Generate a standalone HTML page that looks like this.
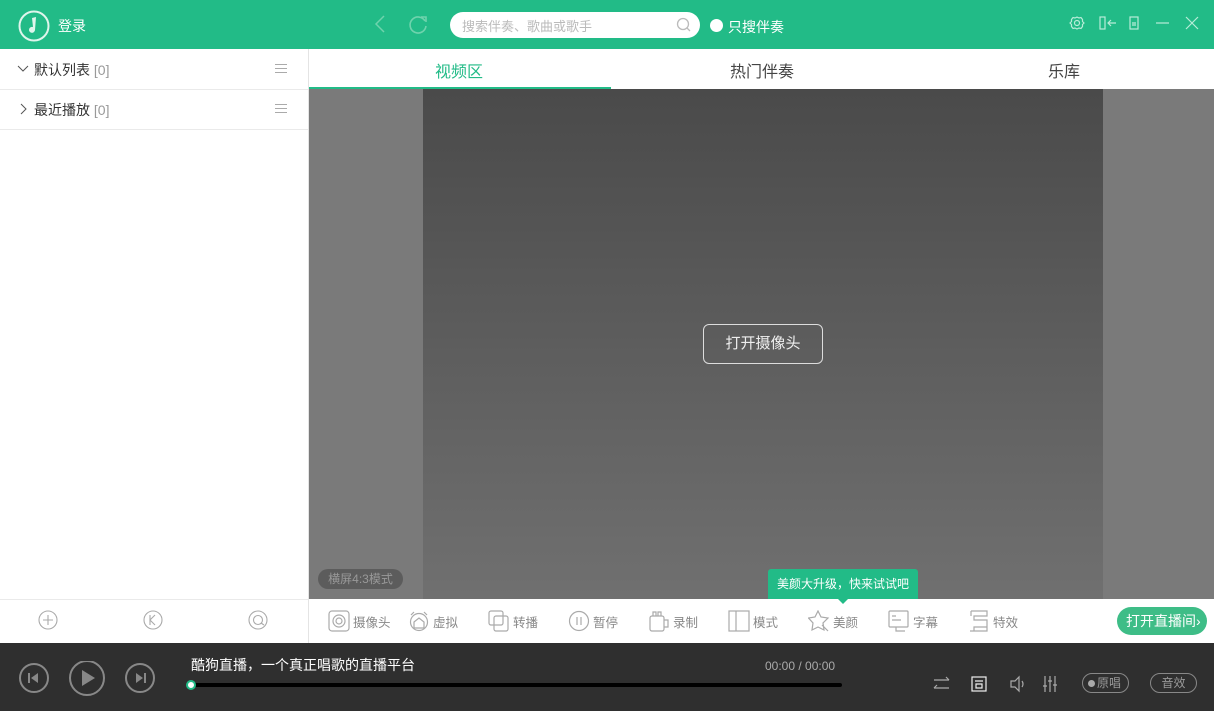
<!DOCTYPE html>
<html><head><meta charset="utf-8"><style>
*{margin:0;padding:0;box-sizing:border-box}
body{width:1214px;height:711px;overflow:hidden;font-family:"Liberation Sans","Noto Sans CJK SC",sans-serif;background:#fff;position:relative}
.abs{position:absolute}
.hdr{left:0;top:0;width:1214px;height:49px;background:#22bb87}
.t{font-size:14px;color:#333}
.gray{color:#999}
.tool{position:absolute;top:609px;height:24px;font-size:12.5px;color:#888;display:flex;align-items:center;gap:3px}
.tool svg{stroke:#aaa;fill:none;stroke-width:1.2}
</style></head><body>
<div class="abs hdr"></div>
<svg class="abs" style="left:18px;top:10px" width="32" height="32" viewBox="0 0 32 32"><circle cx="16" cy="16" r="14.5" fill="none" stroke="#dff5ec" stroke-width="2"/><path d="M14 8 L18 7 L17 20 A3 3 0 1 1 15 17 Z" fill="#dff5ec"/></svg>
<div class="abs" style="left:58px;top:16px;color:#fff;font-size:14px">登录</div>
<svg class="abs" style="left:372px;top:14px" width="16" height="20"><path d="M12 2 L4 10 L12 18" stroke="#6fd3ad" fill="none" stroke-width="1.5"/></svg>
<svg class="abs" style="left:408px;top:13px" width="22" height="22"><path d="M17 8 A8 8 0 1 0 18 13" stroke="#6fd3ad" fill="none" stroke-width="1.6"/><path d="M13 4 L18 4 L18 9" stroke="#6fd3ad" fill="none" stroke-width="1.6"/></svg>
<div class="abs" style="left:450px;top:12px;width:250px;height:26px;background:#fff;border-radius:13px"></div>
<div class="abs" style="left:462px;top:16px;font-size:13px;color:#bbb">搜索伴奏、歌曲或歌手</div>
<svg class="abs" style="left:676px;top:17px" width="16" height="16"><circle cx="7" cy="7" r="5.5" stroke="#bbb" fill="none" stroke-width="1.3"/><path d="M11 11 L14 14" stroke="#bbb" stroke-width="1.3"/></svg>
<div class="abs" style="left:710px;top:19px;width:13px;height:13px;border-radius:50%;background:#fff"></div>
<div class="abs" style="left:728px;top:17px;color:#fff;font-size:14px">只搜伴奏</div>
<svg class="abs" style="left:1068px;top:14px" width="140" height="20" fill="none" stroke="#b8ecd8" stroke-width="1.2">
<circle cx="9" cy="9" r="2.5"/><path d="M9 3 L11 4 L13 3.5 L14.5 5.5 L14.5 7.5 L16 9 L14.5 10.5 L14.5 12.5 L13 14.5 L11 14 L9 15 L7 14 L5 14.5 L3.5 12.5 L3.5 10.5 L2 9 L3.5 7.5 L3.5 5.5 L5 3.5 L7 4 Z"/>
<rect x="32" y="3" width="5" height="12"/><path d="M40 9 H48 M43 6 L40 9 L43 12"/>
<rect x="62" y="3" width="8" height="12"/><path d="M64 9 H68 M64 11 H68"/>
<path d="M88 9 H101"/>
<path d="M118 3 L130 15 M130 3 L118 15"/>
</svg>
<div class="abs" style="left:308px;top:49px;width:1px;height:594px;background:#e4e4e4"></div>
<div class="abs" style="left:0;top:89px;width:308px;height:1px;background:#eaeaea"></div>
<div class="abs" style="left:0;top:129px;width:308px;height:1px;background:#eaeaea"></div>
<svg class="abs" style="left:17px;top:63px" width="12" height="12"><path d="M1 3 L6 8 L11 3" stroke="#555" fill="none"/></svg>
<div class="abs t" style="left:34px;top:60px">默认列表 <span class="gray">[0]</span></div>
<svg class="abs" style="left:19px;top:103px" width="10" height="12"><path d="M2 1 L7 6 L2 11" stroke="#555" fill="none"/></svg>
<div class="abs t" style="left:34px;top:100px">最近播放 <span class="gray">[0]</span></div>
<svg class="abs" style="left:274px;top:63px" width="14" height="12"><path d="M1 1.5H13M1 5.5H13M1 9.5H13" stroke="#aaa"/></svg>
<svg class="abs" style="left:274px;top:103px" width="14" height="12"><path d="M1 1.5H13M1 5.5H13M1 9.5H13" stroke="#aaa"/></svg>
<div class="abs" style="left:0;top:599px;width:308px;height:1px;background:#eaeaea"></div>
<svg class="abs" style="left:38px;top:610px" width="240" height="22" fill="none" stroke="#aaa" stroke-width="1.1">
<circle cx="10" cy="10" r="9"/><path d="M10 5V15M5 10H15"/>
<circle cx="115" cy="10" r="9"/><path d="M112 5V15M117 5L112 10L117 15"/>
<circle cx="220" cy="10" r="9"/><circle cx="220" cy="10" r="4.5"/><path d="M223 13L226 15"/>
</svg>
<div class="abs" style="left:435px;top:58px;font-size:16px;color:#22bb87">视频区</div>
<div class="abs" style="left:730px;top:58px;font-size:16px;color:#444">热门伴奏</div>
<div class="abs" style="left:1048px;top:58px;font-size:16px;color:#444">乐库</div>
<div class="abs" style="left:309px;top:87px;width:302px;height:2px;background:#22bb87"></div>
<div class="abs" style="left:309px;top:89px;width:905px;height:510px;background:#7a7a7a"></div>
<div class="abs" style="left:423px;top:89px;width:680px;height:510px;background:linear-gradient(#4a4a4a,#707070)"></div>
<div class="abs" style="left:703px;top:324px;width:120px;height:40px;border:1px solid #ddd;border-radius:6px;color:#eee;font-size:15px;text-align:center;line-height:38px">打开摄像头</div>
<div class="abs" style="left:318px;top:569px;width:85px;height:20px;border-radius:10px;background:#5c5c5c;color:#999;font-size:12px;text-align:center;line-height:20px">横屏4:3模式</div>
<div class="abs" style="left:768px;top:569px;width:150px;height:30px;background:#22bb87;color:#fff;font-size:12px;text-align:center;line-height:30px;border-radius:3px 3px 0 0">美颜大升级，快来试试吧</div>
<div class="abs" style="left:838px;top:599px;width:0;height:0;border-left:5px solid transparent;border-right:5px solid transparent;border-top:5px solid #22bb87"></div>
<div class="tool" style="left:328px"><svg width="22" height="22"><rect x="1" y="1" width="20" height="20" rx="3"/><circle cx="11" cy="11" r="6"/><circle cx="11" cy="11" r="3"/></svg>摄像头</div>
<div class="tool" style="left:408px"><svg width="22" height="22"><circle cx="11" cy="12" r="8.5"/><path d="M6 12L11 8L16 12V18H6Z"/><path d="M3 5L6 2M19 5L16 2"/></svg>虚拟</div>
<div class="tool" style="left:488px"><svg width="22" height="22"><rect x="1" y="1" width="14" height="14" rx="2"/><rect x="6" y="6" width="14" height="15" rx="2"/></svg>转播</div>
<div class="tool" style="left:568px"><svg width="22" height="22"><circle cx="11" cy="11" r="9.5"/><path d="M9 7V15M13 7V15"/></svg>暂停</div>
<div class="tool" style="left:648px"><svg width="22" height="22"><rect x="2" y="6" width="14" height="15" rx="2"/><path d="M16 10H20V17H16M5 6V2H8V6M10 6V2H13V6"/></svg>录制</div>
<div class="tool" style="left:728px"><svg width="22" height="22"><rect x="1" y="1" width="20" height="20"/><path d="M8 1V21"/></svg>模式</div>
<div class="tool" style="left:808px"><svg width="22" height="22"><path d="M10 1L13 7L20 8L15 13L16 20L10 17L4 20L5 13L0.5 8L7 7Z"/><path d="M14 15L20 21"/></svg>美颜</div>
<div class="tool" style="left:888px"><svg width="22" height="22"><rect x="1" y="1" width="19" height="16" rx="1"/><path d="M4 6H8M4 10H13M8 17V21H17"/></svg>字幕</div>
<div class="tool" style="left:968px"><svg width="22" height="22"><path d="M3 1H19V6H6V10H19V17H6V21H2M3 6V1M19 17V21H6"/></svg>特效</div>
<div class="abs" style="left:1117px;top:607px;width:90px;height:28px;border-radius:14px;background:#3ebd87;color:#fff;font-size:14px;line-height:28px;padding-left:9px">打开直播间›</div>
<div class="abs" style="left:0;top:643px;width:1214px;height:68px;background:#2f2f2f"></div>
<svg class="abs" style="left:18px;top:661px" width="140" height="40" fill="none" stroke="#888" stroke-width="2">
<circle cx="16" cy="17" r="14"/><path d="M11 12V22" /><path d="M20 12L13 17L20 22Z" fill="#888" stroke="none"/>
<circle cx="69" cy="17" r="17"/><path d="M64 9L77 17L64 25Z" fill="#888" stroke="none"/>
<circle cx="122" cy="17" r="14"/><path d="M127 12V22"/><path d="M118 12L125 17L118 22Z" fill="#888" stroke="none"/>
</svg>
<div class="abs" style="left:191px;top:655px;color:#fff;font-size:14px">酷狗直播，一个真正唱歌的直播平台</div>
<div class="abs" style="left:765px;top:659px;color:#aaa;font-size:12px">00:00 / 00:00</div>
<div class="abs" style="left:191px;top:683px;width:651px;height:4px;background:#000;border-radius:2px"></div>
<div class="abs" style="left:186px;top:680px;width:10px;height:10px;border-radius:50%;background:#fff;border:2px solid #22bb87"></div>
<svg class="abs" style="left:932px;top:674px" width="140" height="20" fill="none" stroke="#aaa" stroke-width="1.2">
<path d="M2 6H17M14 3L17 6M2 14H17M5 11L2 14"/>
<rect x="40" y="3" width="14" height="14" stroke="#eee"/><path d="M43 7H51M44 10H50V14H44Z" stroke="#eee"/>
<path d="M79 7H83L87 3V17L83 13H79Z M90 7Q92 10 90 13"/>
<path d="M113 2V18M118 2V18M123 2V18M111 12H115M116 7H120M121 11H125"/>
</svg>
<div class="abs" style="left:1082px;top:673px;width:47px;height:20px;border:1px solid #888;border-radius:10px;color:#999;font-size:12px;line-height:18px;padding-left:5px"><span style="display:inline-block;width:7px;height:7px;border-radius:50%;background:#aaa;margin-right:2px"></span>原唱</div>
<div class="abs" style="left:1150px;top:673px;width:47px;height:20px;border:1px solid #888;border-radius:10px;color:#999;font-size:12px;line-height:18px;text-align:center">音效</div>
</body></html>
